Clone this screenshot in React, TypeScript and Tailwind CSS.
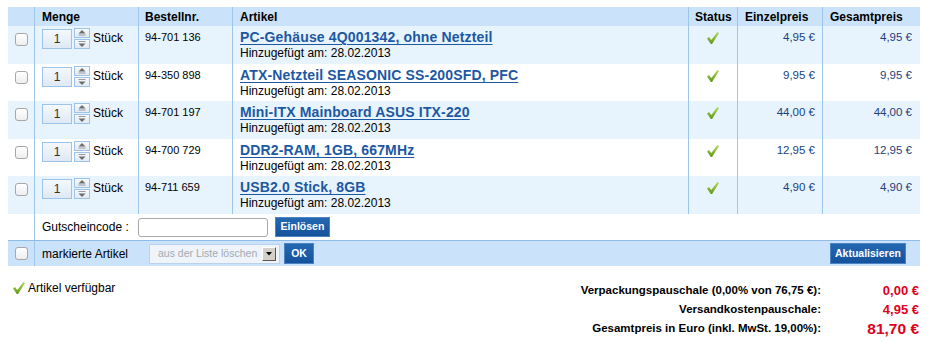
import React from "react";

type Item = {
  nr: string;
  name: string;
  price: string;
  total: string;
};

const items: Item[] = [
  { nr: "94-701 136", name: "PC-Gehäuse 4Q001342, ohne Netzteil", price: "4,95 €", total: "4,95 €" },
  { nr: "94-350 898", name: "ATX-Netzteil SEASONIC SS-200SFD, PFC", price: "9,95 €", total: "9,95 €" },
  { nr: "94-701 197", name: "Mini-ITX Mainboard ASUS ITX-220", price: "44,00 €", total: "44,00 €" },
  { nr: "94-700 729", name: "DDR2-RAM, 1GB, 667MHz", price: "12,95 €", total: "12,95 €" },
  { nr: "94-711 659", name: "USB2.0 Stick, 8GB", price: "4,90 €", total: "4,90 €" },
];

const rowHeights = ["h-[38px]", "h-[37px]", "h-[38px]", "h-[37px]", "h-[38px]"];

const cols = "grid grid-cols-[26px_104px_94px_456px_49px_85px_98px]";

function CheckMark({ id }: { id: string }) {
  return (
    <svg width="12" height="12" viewBox="0 0 12 12" className="block">
      <defs>
        <linearGradient id={id} x1="0" y1="0" x2="0" y2="1">
          <stop offset="0" stopColor="#b3dd58" />
          <stop offset="1" stopColor="#5e9818" />
        </linearGradient>
      </defs>
      <polygon points="0,6.6 2,5.1 4.3,8 10.4,0 12,1.1 5.1,12 3.8,12" fill={`url(#${id})`} />
    </svg>
  );
}

function Box() {
  return (
    <input
      type="checkbox"
      className="appearance-none block w-[13px] h-[13px] m-0 border border-[#a7a7a7] rounded-[3px] bg-gradient-to-b from-white to-[#eeeeee]"
    />
  );
}

function Qty() {
  return (
    <div className="flex items-start pt-[3px] pl-[7px]">
      <div className="w-[30px] h-[20px] border border-[#9dc3e8] bg-gradient-to-b from-[#f4f8fc] to-[#dfe9f4] flex items-center justify-center text-[12px] text-[#3a3020]">
        1
      </div>
      <div className="ml-[2px] -mt-[1px] flex flex-col gap-[1px]">
        <div className="w-[16px] h-[10px] border border-[#9dc3e8] bg-gradient-to-b from-[#f6f9fc] to-[#e1eaf4] flex items-center justify-center">
          <svg width="8" height="6" viewBox="0 0 8 6">
            <polygon points="4,0 7.5,3.5 0.5,3.5" fill="#6d6d6d" />
            <rect x="0.5" y="4.5" width="7" height="1" fill="#9a9a9a" />
          </svg>
        </div>
        <div className="w-[16px] h-[10px] border border-[#9dc3e8] bg-gradient-to-b from-[#f6f9fc] to-[#e1eaf4] flex items-center justify-center">
          <svg width="8" height="6" viewBox="0 0 8 6">
            <rect x="0.5" y="0" width="7" height="1" fill="#9a9a9a" />
            <polygon points="0.5,2.5 7.5,2.5 4,6" fill="#6d6d6d" />
          </svg>
        </div>
      </div>
      <span className="ml-[3px] leading-[19px] text-[12px] text-black">Stück</span>
    </div>
  );
}

function BlueButton({ label, w, h }: { label: string; w: string; h: string }) {
  return (
    <button
      className={`${w} ${h} border border-[#4c84c3] bg-gradient-to-b from-[#2468b2] to-[#15529b] text-white font-bold text-[10.5px] flex items-center justify-center`}
    >
      {label}
    </button>
  );
}

export default function App() {
  return (
    <div className="w-[935px] h-[343px] bg-white pt-[7px] pl-2 font-['Liberation_Sans',Arial,sans-serif] text-[12px] text-black overflow-hidden">
      <div className="w-[912px]">
        {/* header */}
        <div className={`${cols} h-[19px] bg-[#cae3fa] font-bold text-[12px] text-black`}>
          <div />
          <div className="border-l border-[#9ec5ea] pl-[7px] flex items-center">Menge</div>
          <div className="border-l border-[#9ec5ea] pl-[6px] flex items-center">Bestellnr.</div>
          <div className="border-l border-[#9ec5ea] pl-[7px] flex items-center">Artikel</div>
          <div className="border-l border-[#9ec5ea] pl-[6px] flex items-center">Status</div>
          <div className="border-l border-[#9ec5ea] pl-[7px] flex items-center">Einzelpreis</div>
          <div className="border-l border-[#9ec5ea] pl-[7px] flex items-center">Gesamtpreis</div>
        </div>

        {/* items */}
        {items.map((it, i) => (
          <div key={it.nr} className={`${cols} ${rowHeights[i]} ${i % 2 === 0 ? "bg-[#e7f3fd]" : "bg-white"}`}>
            <div className="flex justify-center pt-[7px]">
              <Box />
            </div>
            <div className="border-l border-[#9ec5ea]">
              <Qty />
            </div>
            <div className="border-l border-[#9ec5ea] pl-[6px] pt-[3px] text-[11px] leading-[17px]">{it.nr}</div>
            <div className="border-l border-[#9ec5ea] pl-[7px] pt-[3px]">
              <a className="block font-bold text-[14px] tracking-[0.15px] leading-[17px] text-[#1d58a2] underline underline-offset-[2px]">
                {it.name}
              </a>
              <div className="text-[12px] leading-[15px]">Hinzugefügt am: 28.02.2013</div>
            </div>
            <div className="border-l border-[#9ec5ea] flex justify-center pt-[6px]">
              <CheckMark id={`ck${i}`} />
            </div>
            <div className="border-l border-[#9ec5ea] pr-[7px] pt-[3px] text-right text-[11.5px] leading-[17px] text-[#1c3f7e]">
              {it.price}
            </div>
            <div className="border-l border-[#9ec5ea] pr-[8px] pt-[3px] text-right text-[11.5px] leading-[17px] text-[#1c3f7e]">
              {it.total}
            </div>
          </div>
        ))}

        {/* voucher */}
        <div className="grid grid-cols-[26px_1fr] h-[26px]">
          <div />
          <div className="border-l border-[#9ec5ea] pl-[7px] flex items-center">
            <span className="w-[96px]">Gutscheincode :</span>
            <input className="w-[130px] h-[19px] border border-[#a9a9a9] rounded-[3px] bg-white" />
            <div className="ml-[7px]">
              <BlueButton label="Einlösen" w="w-[55px]" h="h-[20px]" />
            </div>
          </div>
        </div>

        {/* marked items */}
        <div className="grid grid-cols-[26px_1fr] h-[26px] bg-[#cae3fa] border-t border-[#8fbbe8]">
          <div className="flex justify-center items-center">
            <Box />
          </div>
          <div className="border-l border-[#9ec5ea] pl-[7px] pr-[14px] flex items-center">
            <span className="w-[107px]">markierte Artikel</span>
            <div className="w-[131px] h-[20px] border border-[#bcd2ea] bg-[#eef4fa] flex items-center pl-[8px] pr-[3px] justify-between">
              <span className="text-[10.5px] text-[#a3a9b1]">aus der Liste löschen</span>
              <span className="w-[14px] h-[14px] bg-[#d4d0c8] border-t border-l border-t-white border-l-white border-b border-r border-b-[#555] border-r-[#555] flex items-center justify-center">
                <svg width="6" height="4" viewBox="0 0 6 4">
                  <polygon points="0,0 6,0 3,3.5" fill="#000" />
                </svg>
              </span>
            </div>
            <div className="ml-[4px]">
              <BlueButton label="OK" w="w-[30px]" h="h-[21px]" />
            </div>
            <div className="ml-auto">
              <BlueButton label="Aktualisieren" w="w-[76px]" h="h-[21px]" />
            </div>
          </div>
        </div>

        {/* footer */}
        <div className="flex justify-between mt-[15px]">
          <div className="pl-[5px] -mt-[3px] flex items-center gap-[3px] h-[19px]">
            <CheckMark id="ckf" />
            <span className="text-[12px]">Artikel verfügbar</span>
          </div>
          <div className="grid grid-cols-[auto_98px] font-bold leading-[19px]">
            <div className="text-right text-[11.5px] pr-[1px]">Verpackungspauschale (0,00% von 76,75 €):</div>
            <div className="text-right text-[13px] text-[#e2001a] pr-[1px]">0,00 €</div>
            <div className="text-right text-[11.5px] pr-[1px]">Versandkostenpauschale:</div>
            <div className="text-right text-[13px] text-[#e2001a] pr-[1px]">4,95 €</div>
            <div className="text-right text-[11.5px] pr-[1px]">Gesamtpreis in Euro (inkl. MwSt. 19,00%):</div>
            <div className="text-right text-[15.5px] text-[#e2001a] pr-[1px]">81,70 €</div>
          </div>
        </div>
      </div>
    </div>
  );
}
